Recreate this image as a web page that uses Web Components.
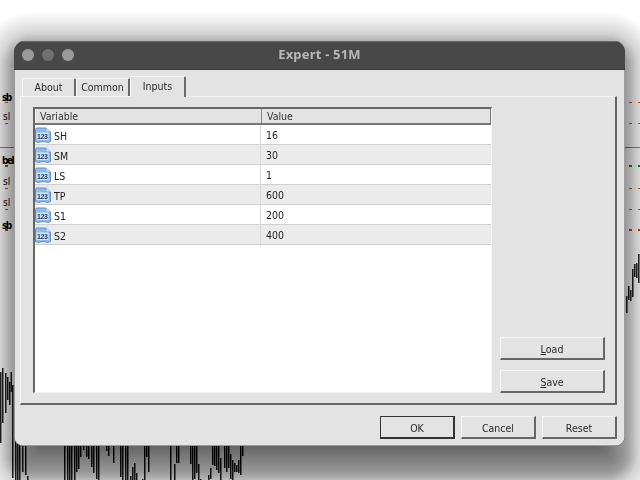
<!DOCTYPE html>
<html><head><meta charset="utf-8"><style>
html,body{margin:0;padding:0;background:#fff}
body{width:640px;height:480px;overflow:hidden;font:10px "DejaVu Sans",sans-serif;font-stretch:condensed;color:#222}
</style></head><body>
<chart-backdrop></chart-backdrop>
<dialog-window heading="Expert - 51M">
  <tab-strip>
    <tab-item>About</tab-item><tab-item>Common</tab-item><tab-item active>Inputs</tab-item>
  </tab-strip>
  <inputs-panel>
    <param-table>
      <param-row name="SH" value="16"></param-row>
      <param-row name="SM" value="30" alt></param-row>
      <param-row name="LS" value="1"></param-row>
      <param-row name="TP" value="600" alt></param-row>
      <param-row name="S1" value="200"></param-row>
      <param-row name="S2" value="400" alt></param-row>
    </param-table>
    <push-button slot="side" wide><u>L</u>oad</push-button>
    <push-button slot="side" wide><u>S</u>ave</push-button>
  </inputs-panel>
  <push-button slot="foot" primary>OK</push-button>
  <push-button slot="foot">Cancel</push-button>
  <push-button slot="foot">Reset</push-button>
</dialog-window>
<script>
function def(name,html,init){customElements.define(name,class extends HTMLElement{
  connectedCallback(){ if(this.shadowRoot) return; const r=this.attachShadow({mode:'open'}); r.innerHTML=typeof html==='function'?html(this):html; init&&init(r,this);}
});}
def('chart-backdrop',()=>{
  const pts=[[36,0],[14,.17],[8,.27],[1,.38],[-25,.56]];
  const T=d=>{ if(d>=36)return 0; if(d<=-25)return .56; for(let i=0;i<pts.length-1;i++){const [a,ta]=pts[i],[b,tb]=pts[i+1]; if(d<=a&&d>=b)return ta+(tb-ta)*(a-d)/(a-b);} return 0;};
  let shade='';
  for(let d=35;d>=-25;d--){
    const a=1-(1-T(d))/(1-T(d+1));
    shade+=`<rect x="${14-d}" y="${47-d}" width="${611+2*d}" height="${425+2*d}" rx="${Math.max(d+18,6)}" fill="#000" fill-opacity="${a.toFixed(4)}"/>`;
  }
  const bars=[];
  const data=[[0,372,443],[2,368,423],[5,373,413],[7,377,400],[9,382,405],[10.5,372,392],[12,385,478],
  [15,440,480],[17,440,480],[19,440,480],[22,440,472],[25,440,475],[27,476,480],
  [64,440,480],[67,440,480],[69,440,480],[71,440,480],[74,440,480],[76,440,472],[78,440,469],[80,440,457],[83,440,450],[86,440,457],[88,440,459],[91,440,467],[93,440,473],[96,440,479],[98,440,480],[106,440,451],[108,440,456],[113,440,463],[120,440,477],[122,440,480],[125,440,480],[127,440,480],
  [130,476,480],[132,467,480],[134,463,480],[136,473,480],[142,479,480],[144,440,480],[146,440,457],[148,440,472],[170,440,480],[174,464,480],[176,440,463],[178,440,463],[190,440,464],[192,440,480],[194,440,479],[196,440,473],[198,464,480],[200,479,480],[208,475,480],[210,468,479],[212,440,465],[214,440,466],[216,440,470],[218,440,473],[220,458,480],[224,440,468],[226,440,472],[228,440,468],[230,454,479],[232,460,480],[234,463,472],[236,465,472],[238,460,473],[240,440,475],[242,440,456],
  [626,296,313],[628,286,300],[630,290,301],[632,269,297],[634,264,277],[636,263,278],[638,254,283]];
  data.forEach(a=>bars.push(`<rect x="${a[0]}" y="${a[1]}" width="1.5" height="${a[2]-a[1]}"/>`));
  const dash=(y,c,h)=>`<rect x="629" y="${y}" width="3" height="${h}" fill="${c}"/><rect x="638" y="${y}" width="2" height="${h}" fill="${c}"/>`;
  const tick=(y,c,h)=>`<rect x="5" y="${y}" width="3" height="${h}" fill="${c}"/>`;
  const O='#e0562a',G='#2f8a2f',R='#d8441f';
  return `<style>:host{position:absolute;inset:0;display:block;overflow:hidden}svg{display:block}
  text{font:10px "DejaVu Sans",sans-serif;font-stretch:condensed;fill:#222}
  .b{font-weight:bold;fill:#111;letter-spacing:-1.5px}</style>
  <svg width="640" height="480" viewBox="0 0 640 480">
   <rect x="0" y="147" width="640" height="1" fill="#8a8a8a"/>
   <g fill="#333">${bars.join('')}</g>
   ${dash(102,O,1)}${dash(123,O,1)}${dash(165,G,2)}${dash(188,O,1)}${dash(209,O,1)}${dash(229,R,2)}
   ${tick(102,O,1)}${tick(123,O,1)}${tick(165,G,2)}${tick(188,O,1)}${tick(209,O,1)}${tick(229,R,2)}
   <text class="b" x="2" y="101">sb</text><text x="3" y="120">sl</text><text class="b" x="2" y="164">bel</text><text x="3" y="185">sl</text><text x="3" y="206">sl</text><text class="b" x="2" y="229">sb</text>
   <g>${shade}</g>
  </svg>`;
});
def('dialog-window',h=>`<style>
:host{position:absolute;left:14px;top:41px;width:611px;height:405px;display:block}
.win{width:100%;height:100%;display:flex;flex-direction:column;background:#e3e3e3;border-radius:11px 11px 9px 9px;box-shadow:inset 0 0 0 .5px #555;overflow:hidden;filter:blur(.3px)}
.bar{flex:none;background:#484848;border-top:1px solid #6a6a6a;border-bottom:1px solid #3a3a3a;height:27px;display:flex;align-items:center;position:relative}
.dots{position:absolute;left:8px;top:7px;display:flex;gap:8px}
.dots i{width:12px;height:12px;border-radius:50%;background:#9b9b9b}
.dots i:nth-child(2){background:#707070}
h1{margin:0;padding-bottom:3px;width:100%;text-align:center;font:bold 13px "Noto Sans",sans-serif;color:#b9b9b9;letter-spacing:.2px}
.body{flex:1;display:flex;flex-direction:column;padding:6px 8px 7px 6px;min-height:0}
.foot{display:flex;justify-content:flex-end;gap:6px;padding-top:11px}
</style><div class="win"><div class="bar"><div class="dots"><i></i><i></i><i></i></div><h1>${h.getAttribute('heading')}</h1></div>
<div class="body"><slot></slot><div class="foot"><slot name="foot"></slot></div></div></div>`);
def('tab-strip',`<style>:host{display:flex;height:20px;padding-left:2px;align-items:flex-end;flex:none}</style><slot></slot>`);
def('tab-item',`<style>:host{display:flex;align-items:center;justify-content:center;box-sizing:border-box;height:18px;width:54px;padding-bottom:2px;background:#e3e3e3;border-top:1px solid #f6f6f6;border-left:1px solid #f6f6f6;border-right:2px solid #6a6a6a;border-radius:2px 2px 0 0;font-size:10.5px;color:#2a2a2a;position:relative}
:host([active]){height:21px;width:56px;padding-bottom:2px;z-index:1;margin-bottom:-1px}</style><slot></slot>`);
def('inputs-panel',`<style>:host{flex:1;display:flex;box-sizing:border-box;border-top:1px solid #f6f6f6;border-left:1px solid #f6f6f6;border-right:2px solid #666;border-bottom:2px solid #666;padding:10px 10px 10px 12px;gap:8px;min-height:0}
.side{width:105px;flex:none;display:flex;flex-direction:column;justify-content:flex-end;gap:10px}</style><slot></slot><div class="side"><slot name="side"></slot></div>`);
def('param-table',`<style>:host{flex:1;display:flex;flex-direction:column;box-sizing:border-box;background:#fff;border-top:2px solid #666;border-left:2px solid #666;border-right:1px solid #f4f4f4;border-bottom:1px solid #f4f4f4;min-width:0}
.head{display:grid;grid-template-columns:226px 1fr;height:14px;background:#e3e3e3;border-bottom:2px solid #777;border-right:1px solid #777}
.head span{padding-left:4px;font-size:10.5px;line-height:14px;color:#333;border-left:1px solid #f6f6f6}
.head span+span{border-left:1px solid #888;padding-left:5px}
</style><div class="head"><span>Variable</span><span>Value</span></div><slot></slot>`);
def('param-row',h=>`<style>:host{display:grid;grid-template-columns:226px 1fr;height:20px;box-sizing:border-box;border-bottom:1px solid #cfcfcf;background:#fff;font-size:10.5px;color:#222}
:host([alt]){background:#ebebeb}
.n{display:flex;align-items:center;gap:3px;border-right:1px solid #d8d8d8;line-height:20px}
.v{padding-left:5px;line-height:21px}
span{padding-top:1px}
svg{flex:none;display:block}
text{font:bold 7px "Liberation Sans",sans-serif;fill:#17386e}</style>
<div class="n"><svg width="16" height="17" viewBox="0 0 16 17"><path d="M.5 2.5Q.5 1 2 1H11L15.5 5V14.5Q13.5 16 11 15Q8 13.8 5.5 15Q2.5 16.2.5 14.5Z" fill="#8fbbe8" stroke="#5e93d0"/><path d="M11 1V5H15.5" fill="#d5e6f7" stroke="#5e93d0" stroke-width=".7"/><rect x="1.5" y="5.5" width="12" height="7.5" fill="#d6e6f8"/><text x="2" y="11.8" textLength="11">123</text></svg><span>${h.getAttribute('name')}</span></div><div class="v">${h.getAttribute('value')}</div>`);
def('push-button',`<style>:host{display:flex;align-items:center;justify-content:center;box-sizing:border-box;width:75px;height:23px;padding-top:1px;background:#e3e3e3;border-top:1px solid #f6f6f6;border-left:1px solid #f6f6f6;border-right:2px solid #666;border-bottom:2px solid #666;font-size:10.5px;color:#2a2a2a}
:host([wide]){width:105px}
:host([primary]){border:2px solid #333;border-top-width:1px;border-left-width:1px}</style><slot></slot>`);
</script></body></html>
